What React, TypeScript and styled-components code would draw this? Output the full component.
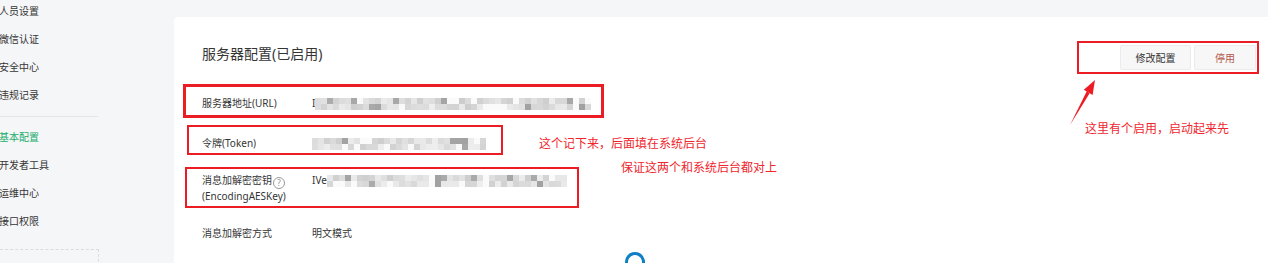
import styled, { createGlobalStyle } from "styled-components";

const GlobalStyle = createGlobalStyle`
  html, body {
    margin: 0;
    padding: 0;
    background: #f5f6f8;
  }
  body {
    font-family: "Noto Sans", "Noto Sans CJK SC", sans-serif;
    color: #353535;
  }
`;

const Page = styled.div`
  position: relative;
  width: 1268px;
  height: 263px;
  overflow: hidden;
  display: flex;
  align-items: flex-start;
`;

const Sidebar = styled.nav`
  width: 174px;
  flex-shrink: 0;
  margin-top: -3px;
`;

const NavGroup = styled.ul`
  list-style: none;
  margin: 0;
  padding: 0;
  width: 98px;
`;

const NavItem = styled.li<{ $active?: boolean }>`
  height: 28px;
  line-height: 28px;
  font-size: 10px;
  margin-left: -1px;
  color: ${(p) => (p.$active ? "#1aad6b" : "#353535")};
`;

const Divider = styled.hr`
  width: 98px;
  margin: 7px 0 6px;
  border: none;
  border-top: 1px solid #e4e5e7;
`;

const DashedBox = styled.div`
  margin: 14px 0 0 -10px;
  width: 107px;
  height: 40px;
  border: 1px dashed #dcdcdc;
`;

const Card = styled.section`
  flex: 1;
  margin-top: 17px;
  height: 260px;
  background: #fff;
  border-radius: 4px 0 0 0;
  padding: 27px 12px 0 28px;
  box-sizing: border-box;
`;

const CardHeader = styled.header`
  display: flex;
  justify-content: space-between;
  align-items: flex-start;
`;

const Title = styled.h2`
  margin: 0;
  font-size: 14px;
  line-height: 20px;
  font-weight: 400;
  color: #353535;
`;

const Actions = styled.div`
  display: flex;
  gap: 3px;
  margin-top: 1px;
`;

const Button = styled.button<{ $danger?: boolean; $w: number }>`
  width: ${(p) => p.$w}px;
  height: 25px;
  font-family: inherit;
  font-size: 10px;
  background: #f7f7f7;
  border: 1px solid #ececec;
  border-radius: 2px;
  color: ${(p) => (p.$danger ? "#b5574b" : "#353535")};
  padding: 0;
`;

const Fields = styled.dl`
  margin: 26px 0 0;
  display: flex;
  flex-direction: column;
  gap: 22px;
`;

const Row = styled.div<{ $spaced?: boolean }>`
  display: flex;
  font-size: 10px;
  line-height: 15px;
  margin-bottom: ${(p) => (p.$spaced ? 3 : 0)}px;
`;

const Label = styled.dt`
  width: 110px;
  flex-shrink: 0;
  color: #353535;
`;

const Value = styled.dd`
  margin: 0;
  display: flex;
  align-items: center;
  height: 15px;
  color: #353535;
`;

const Help = styled.span`
  display: inline-flex;
  align-items: center;
  justify-content: center;
  width: 10px;
  height: 10px;
  margin-left: 1px;
  border: 1px solid #9a9a9a;
  border-radius: 50%;
  font-size: 8px;
  line-height: 1;
  color: #8a8a8a;
  vertical-align: -2px;
`;

const MosaicGrid = styled.span<{ $cols: number }>`
  display: grid;
  grid-template-columns: repeat(${(p) => p.$cols}, 6px);
  grid-auto-rows: 6px;
`;

const Cell = styled.span<{ $shade: number }>`
  background: ${(p) => `rgb(${p.$shade},${p.$shade},${p.$shade})`};
`;

const Spinner = styled.svg`
  display: block;
  margin: 10px 0 0 422px;
`;

/* annotations drawn over the screenshot */
const Mark = styled.div<{ $x: number; $y: number; $w: number; $h: number; $b: number }>`
  position: absolute;
  left: ${(p) => p.$x}px;
  top: ${(p) => p.$y}px;
  width: ${(p) => p.$w}px;
  height: ${(p) => p.$h}px;
  border: ${(p) => p.$b}px solid #ec1c24;
  box-sizing: border-box;
  pointer-events: none;
`;

const Note = styled.span<{ $x: number; $y: number }>`
  position: absolute;
  left: ${(p) => p.$x}px;
  top: ${(p) => p.$y}px;
  font-size: 12px;
  line-height: 16px;
  color: #f0262e;
  white-space: nowrap;
`;

const Arrow = styled.svg`
  position: absolute;
  left: 1065px;
  top: 76px;
`;

function Mosaic({ cols, seed, light = false }: { cols: number; seed: number; light?: boolean }) {
  let s = seed;
  const cells: number[] = [];
  for (let i = 0; i < cols * 2; i++) {
    s = (s * 9301 + 49297) % 233280;
    const r = s / 233280;
    let shade = 200 + Math.round(r * 45);
    if (r < 0.12) shade = 160 + Math.round(r * 100);
    if (light && r > 0.85) shade = 250;
    cells.push(shade);
  }
  return (
    <MosaicGrid $cols={cols}>
      {cells.map((c, i) => (
        <Cell key={i} $shade={c} />
      ))}
    </MosaicGrid>
  );
}

const nav1 = ["人员设置", "微信认证", "安全中心", "违规记录"];
const nav2 = ["基本配置", "开发者工具", "运维中心", "接口权限"];

export default function App() {
  return (
    <>
      <GlobalStyle />
      <Page>
        <Sidebar>
          <NavGroup>
            {nav1.map((n) => (
              <NavItem key={n}>{n}</NavItem>
            ))}
          </NavGroup>
          <Divider />
          <NavGroup>
            {nav2.map((n, i) => (
              <NavItem key={n} $active={i === 0}>
                {n}
              </NavItem>
            ))}
          </NavGroup>
          <DashedBox />
        </Sidebar>

        <Card>
          <CardHeader>
            <Title>服务器配置(已启用)</Title>
            <Actions>
              <Button $w={71}>修改配置</Button>
              <Button $w={62} $danger>
                停用
              </Button>
            </Actions>
          </CardHeader>

          <Fields>
            <Row $spaced>
              <Label>服务器地址(URL)</Label>
              <Value>
                <span>I</span>
                <Mosaic cols={46} seed={7} light />
              </Value>
            </Row>
            <Row>
              <Label>令牌(Token)</Label>
              <Value>
                <Mosaic cols={29} seed={31} light />
              </Value>
            </Row>
            <Row>
              <Label>
                消息加解密密钥<Help>?</Help>
                <br />
                (EncodingAESKey)
              </Label>
              <Value>
                <span>IVe</span>
                <Mosaic cols={40} seed={113} light />
              </Value>
            </Row>
            <Row>
              <Label>消息加解密方式</Label>
              <Value>明文模式</Value>
            </Row>
          </Fields>

          <Spinner width="22" height="22" viewBox="0 0 22 22">
            <circle
              cx="11"
              cy="11"
              r="8.5"
              fill="none"
              stroke="#0f7fc6"
              strokeWidth="3"
              strokeDasharray="40 14"
              transform="rotate(120 11 11)"
            />
          </Spinner>
        </Card>

        <Mark $x={183} $y={84} $w={421} $h={34} $b={3} />
        <Mark $x={187} $y={125} $w={316} $h={30} $b={2} />
        <Mark $x={185} $y={167} $w={394} $h={41} $b={2} />
        <Mark $x={1077} $y={41} $w={182} $h={33} $b={2} />

        <Note $x={539} $y={136}>这个记下来，后面填在系统后台</Note>
        <Note $x={621} $y={160}>保证这两个和系统后台都对上</Note>
        <Note $x={1085} $y={121}>这里有个启用，启动起来先</Note>

        <Arrow width="36" height="54" viewBox="0 0 36 54">
          <polygon points="5,49 22,14.8 24.5,17.6" fill="#ec1c24" />
          <polygon points="30,4 27.6,19 18.8,13.8" fill="#ec1c24" />
        </Arrow>
      </Page>
    </>
  );
}
